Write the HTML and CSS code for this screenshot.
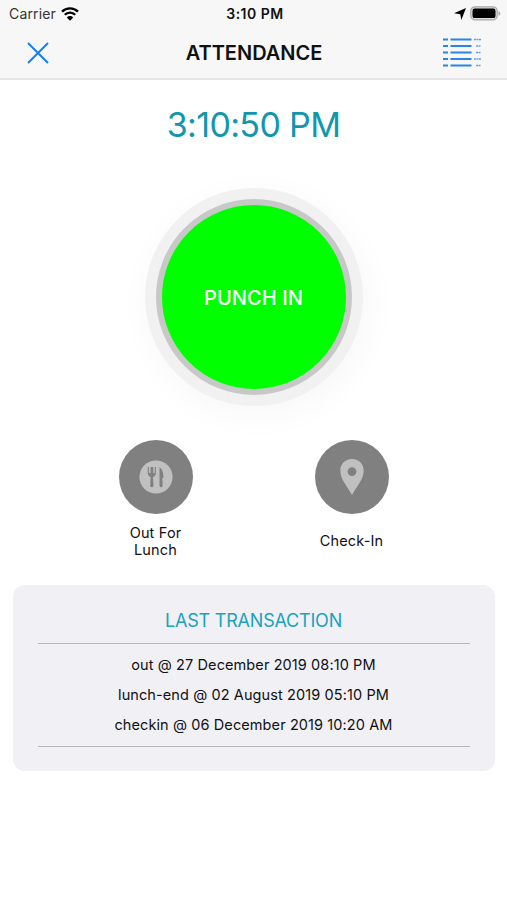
FILE: index.html
```html
<!DOCTYPE html>
<html lang="en">
<head>
    <meta charset="UTF-8">
    <meta name="viewport" content="width=device-width, initial-scale=1.0">
    <title>Attendance</title>
    <link rel="stylesheet" href="styles.css">
</head>
<body>

<header class="header">
    <!-- Status bar -->
    <div class="status-bar">
        <div class="status-left">
            <span class="carrier">Carrier</span>
            <svg class="wifi" width="18" height="14" viewBox="0 0 18 14">
                <path d="M1 4.600a11.300 11.300 0 0 1 16 0M3.800 7.800a7.300 7.300 0 0 1 10.400 0" fill="none" stroke="#000" stroke-width="2.300"/>
                <path d="M5.800 10.400a4.500 4.500 0 0 1 6.400 0L9 13.700z"/>
            </svg>
        </div>
        <span class="status-time">3:10 PM</span>
        <div class="status-right">
            <svg width="12" height="12" viewBox="0 0 12 12">
                <path d="M12 0L7.300 12 6.300 6.300 0 5.300z"/>
            </svg>
            <svg width="31" height="15" viewBox="0 0 31 15">
                <rect x=".8" y=".8" width="26.400" height="13" rx="4" fill="#dcdcdc" stroke="#a8a8a8" stroke-width="1.200"/>
                <rect x="2.500" y="2.500" width="23" height="9.600" rx="2.200"/>
                <path d="M28.500 5v4.800q1.800-.7 1.800-2.400T28.500 5z" fill="#a8a8a8"/>
            </svg>
        </div>
    </div>

    <!-- Title bar -->
    <nav class="nav-bar">
        <svg class="close-icon" width="22" height="22" viewBox="0 0 22 22">
            <path d="M1 1l20 20M21 1L1 21" stroke="#107dfb" stroke-width="1.900"/>
        </svg>
        <h1>ATTENDANCE</h1>
        <svg class="list-icon" width="38" height="30" viewBox="0 0 38 30" stroke="#2b84ea" stroke-width="1.800">
            <path d="M0 1.500h5M0 8h5M0 14.500h5M0 21h5M0 27.500h5"/>
            <path d="M7.500 1.500h21M7.500 8h21M7.500 14.500h21M7.500 21h21M7.500 27.500h21"/>
            <path d="M31 1.500h7M33 8h4.500M33 14.500h4.500M31 21h7M33 27.500h4.500" stroke-width="1.300" stroke-dasharray="2 .5" opacity=".75"/>
        </svg>
    </nav>
</header>

<main>
    <div class="clock">3:10:50 PM</div>

    <button class="punch-button">PUNCH IN</button>

    <div class="actions">
        <div class="action">
            <div class="action-circle">
                <svg width="34" height="34" viewBox="0 0 34 34">
                    <circle cx="17" cy="17" r="16.600" fill="#c0c0c0"/>
                    <path d="M8.800 7v6q0 3 2.900 4l-.6 9q1.700 2.500 3.400 0l-.5-9q2.900-1 2.900-4V7h-1.100v6h-1.500V7h-2.800v6H9.900V7z" fill="#808080"/>
                    <path d="M20.500 7q4 3 4 11h-1.200l.4 8q-1.600 2.500-3.200 0z" fill="#808080"/>
                </svg>
            </div>
            <div class="action-label">Out For<br>Lunch</div>
        </div>
        <div class="action">
            <div class="action-circle">
                <svg width="24" height="36" viewBox="0 0 24 36">
                    <path fill-rule="evenodd" d="M12 0C5.200 0 .3 5 .3 11.800.3 20 7 27 12 36c5-9 11.700-16 11.700-24.200C23.700 5 18.800 0 12 0zm0 8.200a4.400 4.400 0 1 1 0 8.800 4.400 4.400 0 0 1 0-8.800z" fill="#c0c0c0"/>
                </svg>
            </div>
            <div class="action-label">Check-In</div>
        </div>
    </div>

    <!-- Last transaction card -->
    <section class="card">
        <h2>LAST TRANSACTION</h2>
        <ul class="transactions">
            <li>out @ 27 December 2019 08:10 PM</li>
            <li>lunch-end @ 02 August 2019 05:10 PM</li>
            <li>checkin @ 06 December 2019 10:20 AM</li>
        </ul>
    </section>
</main>

</body>
</html>
```
FILE: styles.css
```css
/* General styles */
* {
    box-sizing: border-box;
}

body {
    font-family: Inter, "Liberation Sans", sans-serif;
    background-color: #fff;
    color: #111;
    margin: 0;
    height: 900px;
    overflow: hidden;
}

svg {
    display: block;
}

/* Header */
.header {
    height: 80px;
    background-color: #f7f7f7;
    border-bottom: 2px solid #e6e6e6;
}

.status-bar {
    display: grid;
    grid-template-columns: 1fr auto 1fr;
    align-items: center;
    height: 27px;
    padding: 0 6px 0 9px;
    font-size: 14px;
}

.status-left,
.status-right {
    display: flex;
    align-items: center;
    gap: 5px;
}

.status-right {
    justify-content: flex-end;
    gap: 4px;
}

.carrier {
    color: #333;
    letter-spacing: 0.15px;
}

.status-time {
    font-size: 14px;
    font-weight: 600;
    letter-spacing: 0.5px;
}

.nav-bar {
    display: grid;
    grid-template-columns: 1fr auto 1fr;
    align-items: center;
    height: 51px;
    padding: 0 26px 0 27px;
}

.nav-bar h1 {
    margin: 0;
    font-size: 20px;
    font-weight: 600;
}

.list-icon {
    justify-self: end;
}

/* Main content */
main {
    display: flex;
    flex-direction: column;
    align-items: center;
}

.clock {
    margin-top: 24px;
    line-height: 42px;
    font-size: 34px;
    letter-spacing: -0.65px;
    color: #1097ae;
}

.punch-button {
    width: 196px;
    height: 196px;
    margin-top: 53px;
    padding: 2px 0 0;
    border: 6px solid #c8c8c8;
    border-radius: 50%;
    background-color: #00ff00;
    box-shadow: 0 0 0 11px #f1f1f1, 4px 8px 34px 12px rgba(0, 0, 0, 0.035);
    color: #fff;
    font-family: inherit;
    font-size: 20px;
    font-weight: 500;
    letter-spacing: 0.1px;
}

/* Lunch and check-in */
.actions {
    display: flex;
    gap: 122px;
    margin-top: 45px;
    height: 145px;
}

.action {
    width: 74px;
}

.action-circle {
    display: flex;
    align-items: center;
    justify-content: center;
    width: 74px;
    height: 74px;
    border-radius: 50%;
    background-color: #808080;
}

.action-label {
    display: flex;
    align-items: center;
    justify-content: center;
    height: 53px;
    font-size: 14.5px;
    line-height: 17px;
    letter-spacing: 0.15px;
    text-align: center;
    white-space: nowrap;
}

/* Card */
.card {
    width: 482px;
    height: 186px;
    padding: 0 25px;
    border-radius: 12px;
    background-color: #f0f0f5;
    text-align: center;
}

.card h2 {
    margin: 0;
    padding-top: 13px;
    height: 58px;
    line-height: 46px;
    font-size: 18px;
    font-weight: 400;
    letter-spacing: -0.2px;
    color: #1ba3b9;
}

.transactions {
    list-style-type: none;
    margin: 0;
    padding: 6px 0;
    border-top: 1.5px solid #b5b5ba;
    border-bottom: 1.5px solid #b5b5ba;
    font-size: 14.5px;
    line-height: 30px;
    letter-spacing: 0.1px;
}
```
